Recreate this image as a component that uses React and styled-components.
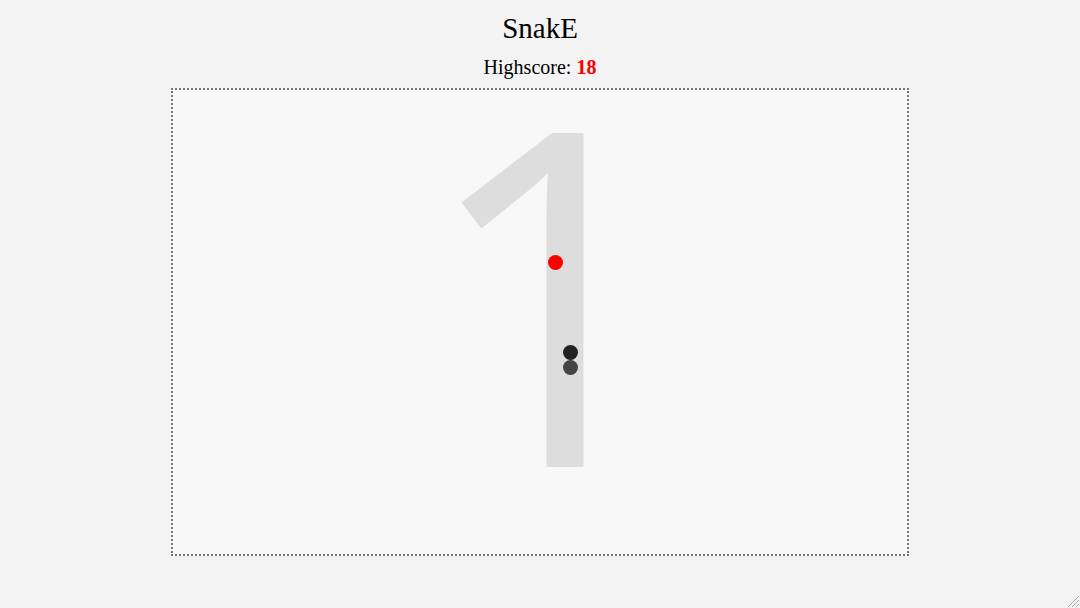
import React from 'react'
import styled, { createGlobalStyle } from 'styled-components';

const GlobalStyle = createGlobalStyle`
  html, body {
    margin: 0;
    padding: 0;
    background: #f3f3f3;
    font-family: "Liberation Serif", "Times New Roman", serif;
    overflow: hidden;
  }
`;

const Page = styled.div`
  height: 608px;
  display: flex;
  flex-direction: column;
  align-items: center;
`;

const Title = styled.h1`
  margin: 11px 0 0;
  font-size: 29px;
  font-weight: normal;
  line-height: 34px;
  color: #000;
`;

const Score = styled.div`
  margin-top: 11px;
  font-size: 20px;
  line-height: 23px;
  color: #000;
  span {
    color: #ff0000;
    font-weight: bold;
  }
`;

const Board = styled.div`
  position: relative;
  margin-top: 9px;
  width: 734px;
  height: 464px;
  border: 2px dotted #777;
  background: #f8f8f8;
  overflow: hidden;
`;

const Countdown = styled.div`
  position: absolute;
  left: 0;
  right: 0;
  top: -38px;
  padding-left: 26px;
  text-align: center;
  font-family: "Open Sans", "Noto Sans", sans-serif;
  font-size: 468px;
  font-weight: 500;
  line-height: 468px;
  color: #dddddd;
  user-select: none;
`;

const Dot = styled.div`
  position: absolute;
  width: 15px;
  height: 15px;
  border-radius: 50%;
  background: ${p => p.color};
`;

const Grip = styled.svg`
  position: fixed;
  right: 0;
  bottom: 0;
`;

// cells of the board, in px from the board's inner top-left
const food = { x: 375, y: 165 };
const snake = [
  { x: 390, y: 255, color: '#222' },
  { x: 390, y: 270, color: '#444' },
];

export default function App() {
  return (
    <>
      <GlobalStyle />
      <Page>
        <Title>SnakE</Title>
        <Score>Highscore: <span>18</span></Score>
        <Board>
          <Countdown>1</Countdown>
          <Dot color="#ff0000" style={{ left: food.x, top: food.y }} />
          {snake.map((s, i) => (
            <Dot key={i} color={s.color} style={{ left: s.x, top: s.y }} />
          ))}
        </Board>
      </Page>
      <Grip width="16" height="16" viewBox="0 0 16 16">
        <path d="M15 4 L4 15 M15 8 L8 15 M15 12 L12 15" stroke="#aaa" strokeWidth="1" />
      </Grip>
    </>
  )
}
